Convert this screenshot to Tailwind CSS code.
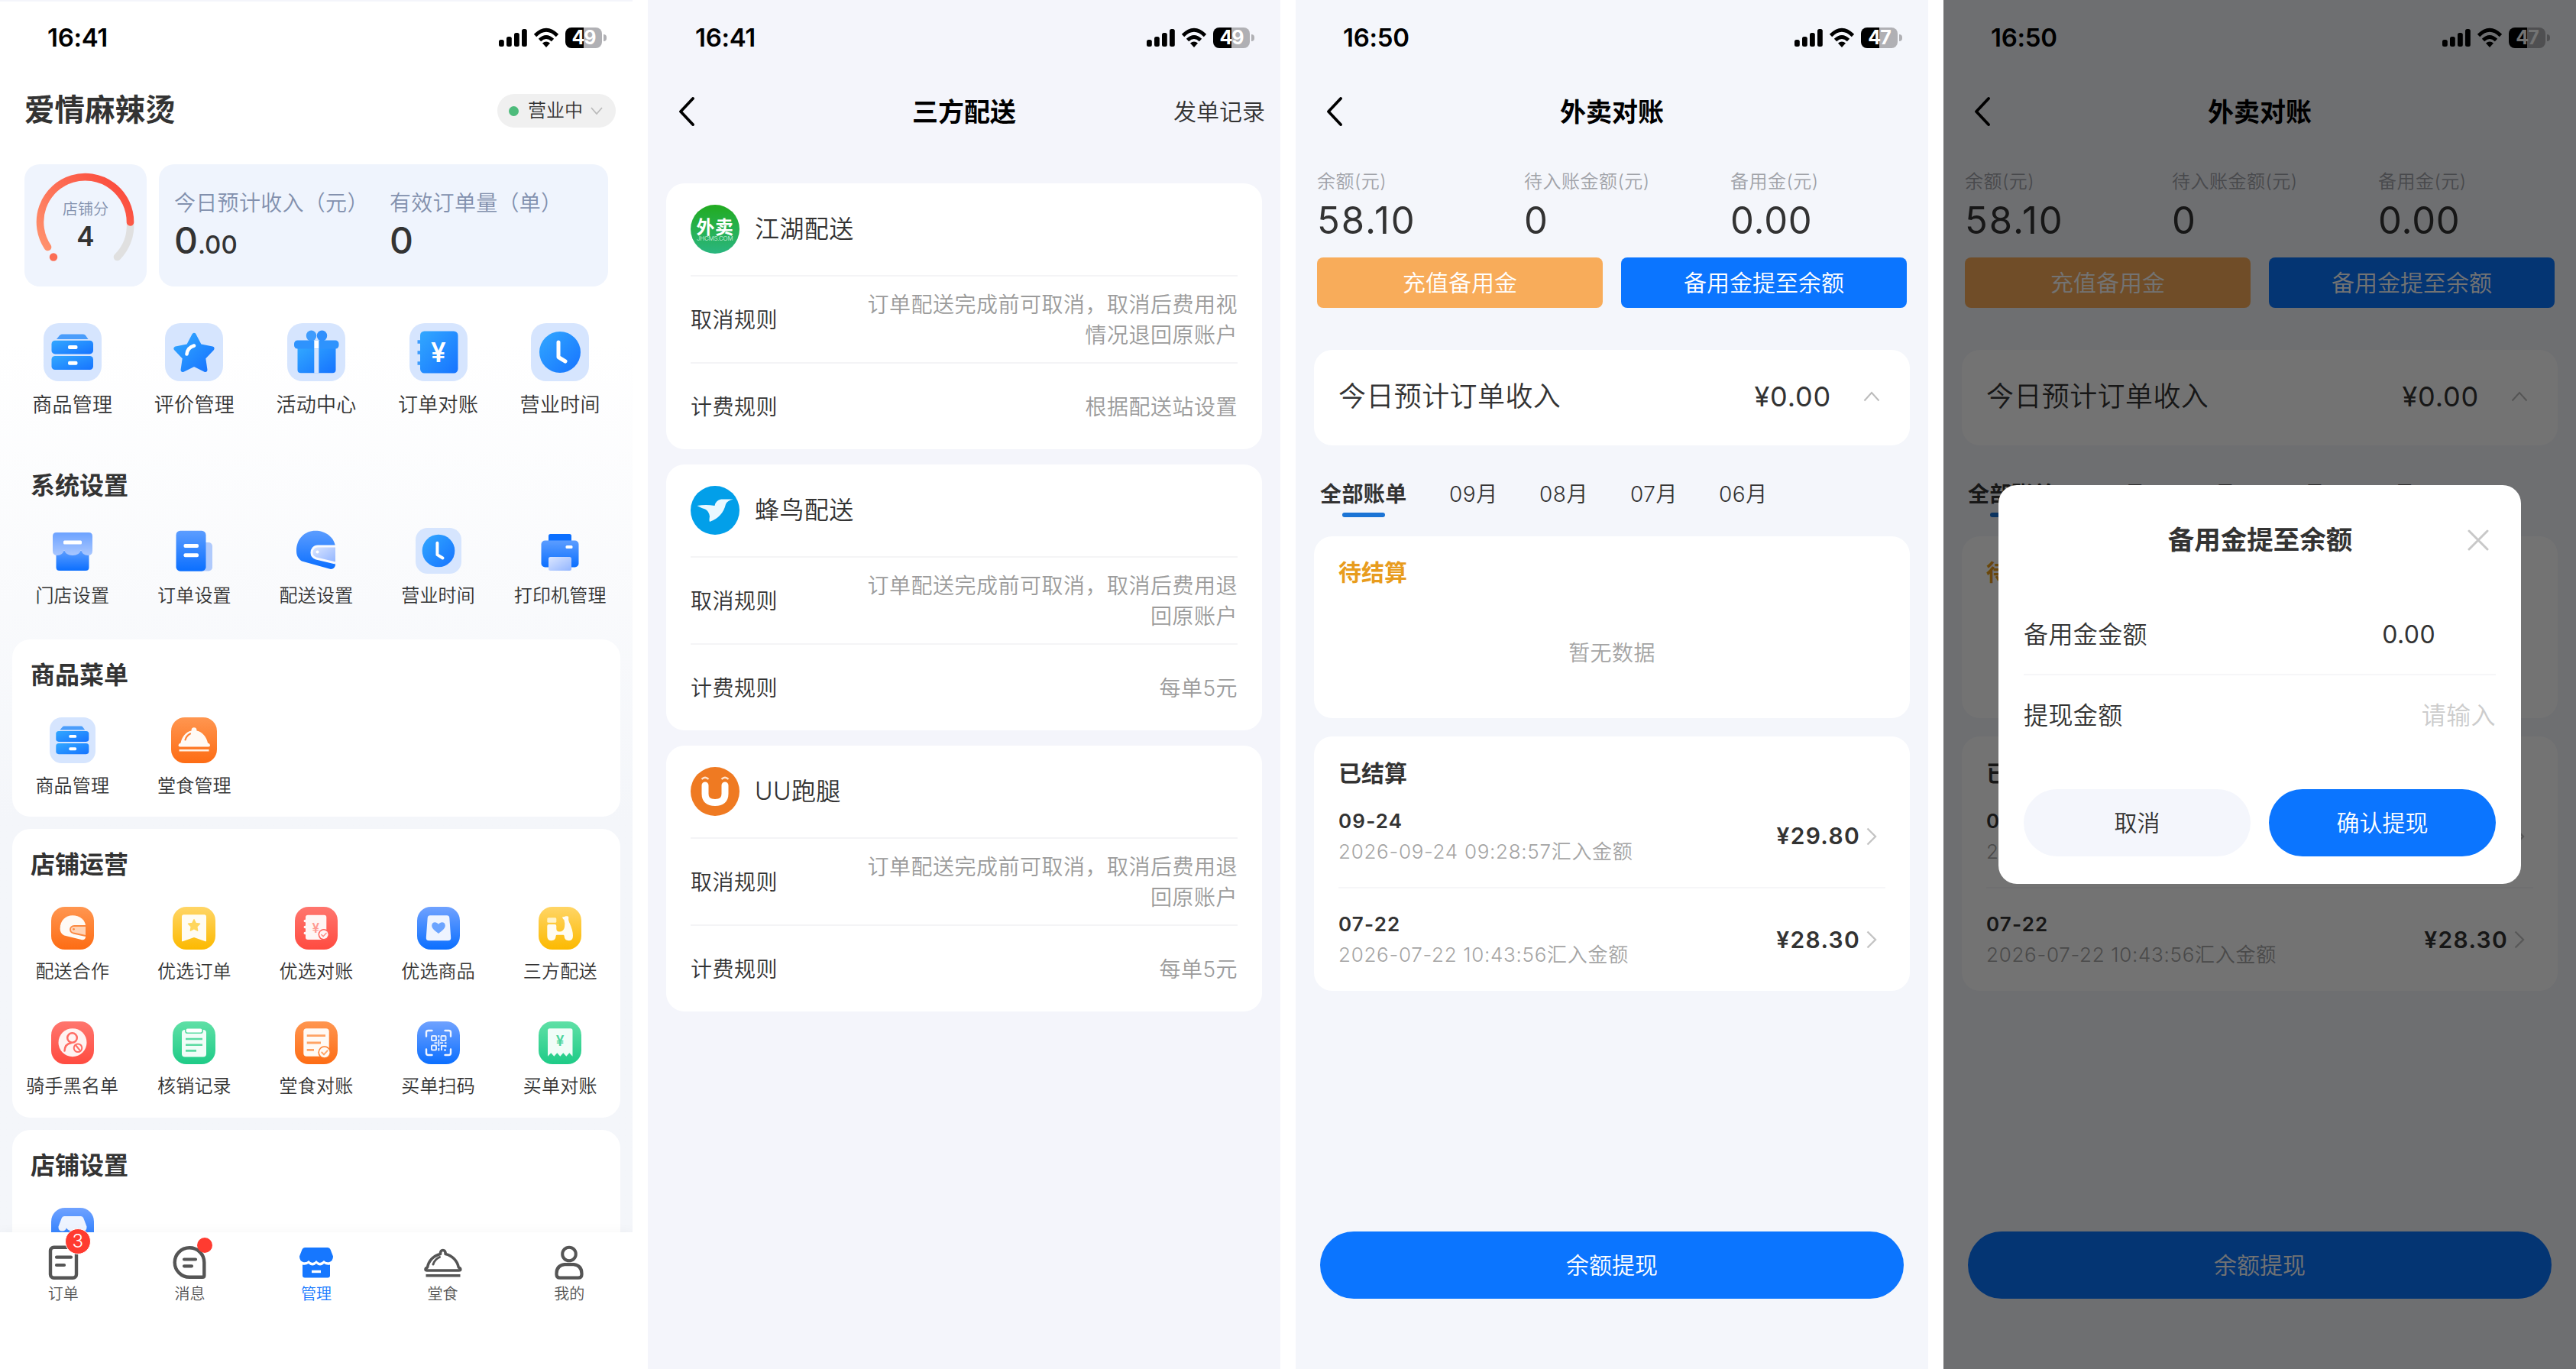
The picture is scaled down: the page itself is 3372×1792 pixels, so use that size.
<!DOCTYPE html>
<html lang="zh-CN">
<head>
    <meta charset="UTF-8">
    <meta name="viewport" content="width=device-width, initial-scale=1.0">
    <title>商家管理</title>
    <script src="https://cdn.jsdelivr.net/npm/@tailwindcss/browser@4"></script>
</head>
<body class="bg-white font-[Inter,'Noto_Sans_CJK_SC',sans-serif] font-[350] text-[#333]">

<!-- Icon sprite -->
<svg class="absolute w-0 h-0">
    <defs>
        <linearGradient id="g-blue" x1="0" y1="0" x2="1" y2="1"><stop offset="0" stop-color="#32a8ff"/><stop offset="1" stop-color="#1673ff"/></linearGradient>
        <linearGradient id="g-blue-v" x1="0" y1="0" x2="0" y2="1"><stop offset="0" stop-color="#5c9dff"/><stop offset="1" stop-color="#0b6fff"/></linearGradient>
        <linearGradient id="g-awning" x1="0" y1="0" x2="0" y2="1"><stop offset="0" stop-color="#6ca2ff"/><stop offset="1" stop-color="#a9c7ff"/></linearGradient>
        <linearGradient id="g-paper" x1="0" y1="0" x2="1" y2="1"><stop offset="0" stop-color="#dbe6ff"/><stop offset="1" stop-color="#92b5ff"/></linearGradient>
        <linearGradient id="t-orange" x1="0" y1="0" x2="0" y2="1"><stop offset="0" stop-color="#ff9650"/><stop offset="1" stop-color="#fd6c14"/></linearGradient>
        <linearGradient id="t-yellow" x1="0" y1="0" x2="0" y2="1"><stop offset="0" stop-color="#ffd566"/><stop offset="1" stop-color="#fcb900"/></linearGradient>
        <linearGradient id="t-red" x1="0" y1="0" x2="0" y2="1"><stop offset="0" stop-color="#ff766e"/><stop offset="1" stop-color="#ff4b40"/></linearGradient>
        <linearGradient id="t-blue" x1="0" y1="0" x2="0" y2="1"><stop offset="0" stop-color="#70a2ff"/><stop offset="1" stop-color="#0b6fff"/></linearGradient>
        <linearGradient id="t-green" x1="0" y1="0" x2="0" y2="1"><stop offset="0" stop-color="#5fe0a6"/><stop offset="1" stop-color="#1ecb87"/></linearGradient>
        <linearGradient id="g-logo" x1="0" y1="0" x2="0" y2="1"><stop offset="0" stop-color="#22ab20"/><stop offset="1" stop-color="#2ab680"/></linearGradient>
        <linearGradient id="g-gauge" x1="0" y1="1" x2="1" y2="0.3"><stop offset="0" stop-color="#ff936e"/><stop offset="1" stop-color="#fb4d3e"/></linearGradient>
    </defs>

    <symbol id="i-drawer" viewBox="0 0 76 76">
        <rect width="76" height="76" rx="20" fill="#d6e5fe"/>
        <path d="M24 14.5h28q2 0 3 1.600l3.500 4.900h-41.500l4-4.900q1.200-1.600 3-1.600z" fill="#4a9dfb"/>
        <rect x="10.500" y="22.700" width="54.500" height="17.700" rx="4.500" fill="url(#g-blue)"/>
        <rect x="10.500" y="43" width="54.500" height="18" rx="4.500" fill="url(#g-blue)"/>
        <rect x="32" y="29" width="12.500" height="5" rx="2" fill="#fff"/>
        <rect x="32" y="49.700" width="12.500" height="5" rx="2" fill="#fff"/>
    </symbol>
    <symbol id="i-star" viewBox="0 0 76 76">
        <rect width="76" height="76" rx="20" fill="#d6e5fe"/>
        <path d="M38 15.500l7.600 14.500 16.200 3.300-11.400 12 2.300 15.900-14.700-7.200-14.700 7.200 2.300-15.900-11.400-12 16.200-3.300z" fill="url(#g-blue)" stroke="url(#g-blue)" stroke-width="5.500" stroke-linejoin="round"/>
        <path d="M28.500 40.500q1-8.500 9.500-11" fill="none" stroke="#fff" stroke-width="4.500" stroke-linecap="round"/>
    </symbol>
    <symbol id="i-gift" viewBox="0 0 76 76">
        <rect width="76" height="76" rx="20" fill="#d6e5fe"/>
        <ellipse cx="31.500" cy="16.500" rx="6.700" ry="7" fill="#3f9cfd"/>
        <ellipse cx="45.500" cy="16.500" rx="6.700" ry="7" fill="#2f8ffd"/>
        <path d="M13.500 31h50v30q0 4.300-4.300 4.300h-41.400q-4.300 0-4.300-4.300z" fill="url(#g-blue)"/>
        <rect x="9" y="22.500" width="58.500" height="11" rx="4.500" fill="#2e93fd"/>
        <rect x="35.300" y="22.500" width="6" height="11" fill="#fff"/>
        <rect x="35.300" y="33.500" width="6" height="32" fill="#d6e5fe"/>
    </symbol>
    <symbol id="i-clock" viewBox="0 0 76 76">
        <rect width="76" height="76" rx="20" fill="#d6e5fe"/>
        <circle cx="38" cy="38" r="27" fill="url(#g-blue)"/>
        <path d="M36 25v19.500l9 5.500" fill="none" stroke="#fff" stroke-width="5" stroke-linecap="round" stroke-linejoin="round"/>
    </symbol>
    <symbol id="i-store" viewBox="0 0 60 60">
        <path d="M8.500 30h43v21.500q0 4.500-4.500 4.500h-34q-4.500 0-4.500-4.500z" fill="url(#g-blue-v)"/>
        <path d="M9 6h42q5 0 5 5v19q0 6-6 6-7 0-9-7-2 7-11 7t-11-7q-2 7-9 7-6 0-6-6v-19q0-5 5-5z" fill="url(#g-awning)"/>
        <rect x="18" y="16.500" width="24" height="5" rx="1.500" fill="#fff"/>
    </symbol>
    <symbol id="i-doc" viewBox="0 0 60 60">
        <rect x="38" y="19" width="16" height="37.500" rx="5" fill="#b0cafc"/>
        <rect x="6.500" y="3.700" width="39" height="53" rx="5.500" fill="url(#g-blue-v)"/>
        <rect x="16.500" y="21" width="19.500" height="5" rx="2" fill="#fff"/>
        <rect x="16.500" y="33.300" width="19.500" height="5" rx="2" fill="#fff"/>
    </symbol>
    <symbol id="i-helmet" viewBox="0 0 60 60">
        <path d="M4 30C4 14 15 3.700 29 3.700c13 0 24 8 26 20V48c0 4-4 7-8 5.500L11 43.500C6 40 4 36 4 30z" fill="url(#g-blue-v)"/>
        <path d="M55 24H32c-5 0-8 4-8 8.500s3 6.500 6 7.500l25 6z" fill="url(#g-paper)"/>
        <path d="M55 24H32c-5 0-8 4-8 8.500s3 6.500 6 7.500l25 6" fill="none" stroke="#f9fafe" stroke-width="3"/>
        <circle cx="31.500" cy="31.500" r="2" fill="#fff"/>
    </symbol>
    <symbol id="i-printer" viewBox="0 0 60 60">
        <rect x="15" y="8" width="30" height="14" rx="2.500" fill="#0b6fff"/>
        <rect x="5.500" y="16.500" width="49" height="35" rx="5" fill="url(#g-blue-v)"/>
        <rect x="37.500" y="23" width="9" height="4" rx="1.500" fill="#fff"/>
        <rect x="15" y="38" width="30" height="18" rx="2.500" fill="url(#g-paper)"/>
    </symbol>
    <symbol id="i-cloche" viewBox="0 0 60 60">
        <rect width="60" height="60" rx="18" fill="url(#t-orange)"/>
        <path d="M26.500 17.500q0-4.200 3.500-4.200t3.500 4.200C41 19 46.500 26 48 33.500q3 1 3 3t-2 2H11.500q-2 0-2-2t3-3C14 26 19 19 26.500 17.500z" fill="#fffaf5"/>
        <path d="M18.500 29.500q1.500-5.500 6.500-8" fill="none" stroke="#fd8438" stroke-width="2.200" stroke-linecap="round"/>
        <path d="M10.500 43.300h39" stroke="#fff1e4" stroke-width="2.600"/>
    </symbol>
    <symbol id="i-rider" viewBox="0 0 56 56">
        <rect width="56" height="56" rx="18" fill="url(#t-orange)"/>
        <path d="M11.600 28.500c0-10 7-17.200 16.500-17.200 8.900 0 16.900 6 16.900 14v14c0 3-2.500 4.500-5.500 3.800l-22.500-5.600c-3.500-1.500-5.400-5-5.400-9z" fill="#fffaf5"/>
        <path d="M45 25H30c-3 0-5 2-5 4.500s2 4.500 4 5l16 3.500z" fill="#ffd3b5"/>
        <path d="M45 25H30c-3 0-5 2-5 4.500s2 4.500 4 5l16 3.500" fill="none" stroke="#fb8840" stroke-width="1.800"/>
        <circle cx="29.500" cy="29.300" r="1.400" fill="#fb8840"/>
    </symbol>
    <symbol id="i-bookmark" viewBox="0 0 56 56">
        <rect width="56" height="56" rx="18" fill="url(#t-yellow)"/>
        <path d="M14.500 10.200h27q2.500 0 2.500 2.500v32q0 1-1.200.5L28 40l-14.800 5.200q-1.200.5-1.200-.5v-32q0-2.500 2.500-2.500z" fill="#fffcf3"/>
        <path d="M28 16.800l2.300 4.800 5.200.7-3.800 3.700.9 5.200-4.600-2.500-4.600 2.500.9-5.200-3.800-3.700 5.200-.7z" fill="#ffd65c" stroke="#ffd65c" stroke-width="1.500" stroke-linejoin="round"/>
    </symbol>
    <symbol id="i-bag" viewBox="0 0 56 56">
        <rect width="56" height="56" rx="18" fill="url(#t-blue)"/>
        <path d="M17 11.300h22q3 0 3.300 3l1.900 26q.3 4-3.700 4h-25q-4 0-3.700-4l1.900-26q.3-3 3.300-3z" fill="#eef4ff"/>
        <path d="M28 35c-5-4-8.800-6.500-8.800-10.500 0-5 6-5.800 8.800-1.800 2.800-4 8.800-3.200 8.800 1.800 0 4-3.800 6.500-8.800 10.500z" fill="#6ba4ff"/>
    </symbol>
    <symbol id="i-scooter" viewBox="0 0 56 56">
        <rect width="56" height="56" rx="18" fill="url(#t-yellow)"/>
        <rect x="11.300" y="14.200" width="12" height="6.500" rx="1.500" fill="#fff3c8"/>
        <path d="M11.300 25q0-2 2-2h8q2 0 2 2v3.500q0 4 3.700 4 6 0 7-6 .8-5-.6-9.500-1.800-.8-2.400-3.700 2.500.2 4.500-1h2.500q1.300.3 1.300 2-.8 3 1.700 8 4 8.500 4 15.700 0 6.300-5.600 6.300-5.400 0-5.900-6.500-.3-1-1.200-1h-8.300q-1.200 0-1.300 1-.4 6.500-5.900 6.500-5.500 0-5.500-6z" fill="#fffcf3"/>
    </symbol>
    <symbol id="i-block" viewBox="0 0 56 56">
        <rect width="56" height="56" rx="18" fill="url(#t-red)"/>
        <circle cx="28" cy="27.700" r="18.500" fill="#fff3f2"/>
        <circle cx="27.500" cy="21.500" r="6.300" fill="none" stroke="#ff6c64" stroke-width="2.500"/>
        <path d="M17.500 38.500q.5-9 8.500-10.200" fill="none" stroke="#ff6c64" stroke-width="2.500" stroke-linecap="round"/>
        <circle cx="35" cy="34.700" r="5.300" fill="none" stroke="#ff6c64" stroke-width="2"/>
        <path d="M32 31l6 7.400" stroke="#ff6c64" stroke-width="2"/>
    </symbol>
    <symbol id="i-clip" viewBox="0 0 56 56">
        <rect width="56" height="56" rx="18" fill="url(#t-green)"/>
        <rect x="12" y="11" width="32" height="35.600" rx="4" fill="#f1fdf8"/>
        <rect x="16.800" y="8.800" width="22.400" height="6.400" rx="2.800" fill="#fff" stroke="#59dca2" stroke-width="1.600"/>
        <path d="M17 23h22M17 30.700h22M17 38.400h14" stroke="#5bdba2" stroke-width="2.600"/>
    </symbol>
    <symbol id="i-list" viewBox="0 0 56 56">
        <rect width="56" height="56" rx="18" fill="url(#t-orange)"/>
        <rect x="11.300" y="9.300" width="33.400" height="36.400" rx="4" fill="#fffaf5"/>
        <path d="M15.700 18.700h24.300M15.700 28h18.300M15.700 37.300h9.300" stroke="#ffa364" stroke-width="2.800"/>
        <circle cx="38.700" cy="40.500" r="8.300" fill="#fd7d2c"/>
        <circle cx="38.700" cy="40.500" r="6.800" fill="#fffaf5"/>
        <path d="M35.200 40.500l2.800 2.800 4.600-5" fill="none" stroke="#ffa364" stroke-width="1.900" stroke-linecap="round"/>
    </symbol>
    <symbol id="i-scan" viewBox="0 0 56 56">
        <rect width="56" height="56" rx="18" fill="url(#t-blue)"/>
        <g fill="none" stroke="#f1f6ff" stroke-width="2.400" stroke-linecap="round">
            <path d="M12 19.500v-5q0-2.500 2.500-2.500h5M36.500 12h5q2.500 0 2.500 2.500v5M44 36.500v5q0 2.500-2.500 2.500h-5M19.500 44h-5q-2.500 0-2.500-2.500v-5"/>
        </g>
        <g fill="none" stroke="#e3edff" stroke-width="2">
            <rect x="19" y="19" width="6" height="6" rx="1"/>
            <rect x="31.500" y="19" width="6" height="6" rx="1"/>
            <rect x="19" y="31.500" width="6" height="6" rx="1"/>
            <path d="M28.300 18v3M28.300 23.500v9M28.300 35v3.500M22.500 28.300h4M30 28.300h4M36 28.300h2.500M32 38v-6h5.500v2M35 37.500h3"/>
        </g>
    </symbol>
    <symbol id="i-shop" viewBox="0 0 56 56">
        <rect width="56" height="56" rx="18" fill="url(#t-blue)"/>
        <path d="M17 11h22q2.500 0 3.300 2.500l4.200 11q.5 6-5 6-4 0-5.500-4-2.500 4-8 4t-8-4q-1.500 4-5.500 4-5.500 0-5-6l4.200-11q.8-2.500 3.300-2.500z" fill="#eef4ff"/>
    </symbol>

    <symbol id="tab-order" viewBox="0 0 60 60">
        <rect x="13" y="7.800" width="34" height="40" rx="4.500" fill="none" stroke="#555" stroke-width="4.400"/>
        <path d="M21 20.700h19M21 31h10" stroke="#555" stroke-width="4.200" stroke-linecap="round"/>
    </symbol>
    <symbol id="tab-msg" viewBox="0 0 60 60">
        <path d="M30 8.200A19.300 19.300 0 0 1 49.300 27.500V44.500Q49.300 46.800 47 46.800H30A19.300 19.300 0 0 1 30 8.200z" fill="none" stroke="#555" stroke-width="4.400"/>
        <path d="M23 23.500h15M23 32.300h10" stroke="#555" stroke-width="4.200" stroke-linecap="round"/>
    </symbol>
    <symbol id="tab-manage" viewBox="0 0 60 60">
        <path d="M15 8h30q2.500 0 3.500 2.500l3.500 9q0 6.500-5.500 7.700-4 .7-6.500-2.200-3 3-5.300 3t-4.700-3q-2.500 3-5 3t-5-3q-2.500 2.900-6.500 2.200-5.500-1.200-5.500-7.700l3.500-9q1-2.500 3.500-2.500z" fill="#1677ff"/>
        <path d="M12 30.500q4.500 1 7.800-1.500 2.700 2.500 5.200 2.500t5-2.500q2.500 2.500 5 2.500t5.200-2.500q3.300 2.500 7.800 1.500v14q0 3-3 3h-30q-3 0-3-3z" fill="#1677ff"/>
        <rect x="24" y="37.800" width="12" height="3.400" fill="#fff"/>
    </symbol>
    <symbol id="tab-dine" viewBox="0 0 60 60">
        <path d="M26.500 16.500q0-5 3.300-5t3.300 5c9 2 15.500 9 17.200 17.500q2.500 1 2.500 2.500t-2 1.500H9q-2 0-2-1.500t2.500-2.500c1.500-8.500 8-15.500 17-17.500z" fill="none" stroke="#555" stroke-width="3.600" stroke-linejoin="round"/>
        <path d="M17 30q2-6.500 8.500-9.500" fill="none" stroke="#555" stroke-width="3" stroke-linecap="round"/>
        <path d="M7.500 44.700h45" stroke="#555" stroke-width="3.600"/>
    </symbol>
    <symbol id="tab-me" viewBox="0 0 60 60">
        <circle cx="30" cy="16.500" r="8.800" fill="none" stroke="#555" stroke-width="4"/>
        <path d="M24 30.200h12q11 1.500 10.500 13 0 4.500-4.500 4.500H18q-4.500 0-4.500-4.500-.5-11.500 10.500-13z" fill="none" stroke="#555" stroke-width="4.200"/>
    </symbol>

    <symbol id="s-signal" viewBox="0 0 40 28">
        <rect x="0" y="16" width="6.800" height="9" rx="2.500"/><rect x="10" y="12" width="6.800" height="13" rx="2.500"/><rect x="20" y="7" width="6.800" height="18" rx="2.500"/><rect x="30" y="2" width="6.800" height="23" rx="2.500"/>
    </symbol>
    <symbol id="s-wifi" viewBox="0 0 34 28">
        <path d="M2.500 10.500Q17-4 31.500 10.500M8.500 16.500Q17 8.500 25.500 16.500" fill="none" stroke="#000" stroke-width="4.800"/>
        <path d="M12 20.500q5-4 10 0L17 26z"/>
    </symbol>
    <symbol id="s-back" viewBox="0 0 22 38">
        <path d="M19 2L3 19l16 17" fill="none" stroke="#000" stroke-width="3.800" stroke-linecap="round" stroke-linejoin="round"/>
    </symbol>
</svg>

<!-- Shared status bar -->
<template id="status-bar">
    <div class="flex h-[99px] shrink-0 items-center justify-between pl-[62px] pr-[34px] text-black">
        <span data-time class="text-[33px] font-semibold leading-none tracking-[-0.3px]"></span>
        <div class="flex items-center">
            <svg class="mr-[5px] h-7 w-10"><use href="#s-signal"/></svg>
            <svg class="mr-[8px] h-7 w-[34px]"><use href="#s-wifi"/></svg>
            <span class="flex h-[27px] w-12 items-center justify-center rounded-lg bg-linear-to-r from-black from-50% to-[#b0b0b4] to-50% text-[25px] font-bold leading-none tracking-[-1px] text-white" data-battery></span>
            <span class="ml-[2px] h-[9px] w-1 rounded-r-full bg-[#b0b0b4]"></span>
        </div>
    </div>
</template>

<!-- Billing screen, used with and without the withdraw dialog -->
<template id="bill-screen">
    <div data-status data-t="16:50" data-b="47"></div>
    <div class="flex h-[94px] shrink-0 items-center px-10">
        <svg class="h-[38px] w-[22px]"><use href="#s-back"/></svg>
        <h1 class="flex-1 pr-[22px] text-center text-[34px] font-bold text-black">外卖对账</h1>
    </div>
    <div class="mt-[27px] flex pl-7">
        <div class="w-[271px]">
            <p class="h-9 text-[24px] leading-9 tracking-[0.5px] text-[#a0a2a8]">余额(元)</p>
            <p class="mt-[3px] h-[60px] text-[49px] font-normal leading-[60px] tracking-[2px]">58.10</p>
        </div>
        <div class="w-[270px]">
            <p class="h-9 text-[24px] leading-9 tracking-[0.5px] text-[#a0a2a8]">待入账金额(元)</p>
            <p class="mt-[3px] h-[60px] text-[49px] font-normal leading-[60px]">0</p>
        </div>
        <div>
            <p class="h-9 text-[24px] leading-9 tracking-[0.5px] text-[#a0a2a8]">备用金(元)</p>
            <p class="mt-[3px] h-[60px] text-[49px] font-normal leading-[60px] tracking-[0.8px]">0.00</p>
        </div>
    </div>
    <div class="mt-[18px] grid grid-cols-2 gap-6 px-7 text-[30px] text-white">
        <button class="h-[66px] rounded-lg bg-[#f8ac5a]">充值备用金</button>
        <button class="h-[66px] rounded-lg bg-[#0b75ff]">备用金提至余额</button>
    </div>
    <div class="mx-6 mt-[55px] flex h-[125px] items-center rounded-3xl bg-white pb-[3px] pl-8 pr-[39px] text-[36px] leading-none">
        <span class="flex-1 tracking-[0.4px]">今日预计订单收入</span>
        <span class="font-normal tracking-[0.8px]">¥0.00</span>
        <svg class="ml-[42px] h-[14px] w-[22px]" viewBox="0 0 22 14"><path d="M1.500 12.500L11 2l9.500 10.500" fill="none" stroke="#bbb" stroke-width="2"/></svg>
    </div>
    <div class="mt-[44px] flex h-[50px] pl-8 text-[28px] leading-10">
        <div class="flex w-[169px] flex-col">
            <span class="pb-[4px] font-bold tracking-[0.4px]">全部账单</span>
            <span class="ml-[29px] h-[6px] w-14 rounded-full bg-[#1b74d5]"></span>
        </div>
        <span class="w-[118px] tracking-[0.5px]">09月</span>
        <span class="w-[119px] tracking-[0.5px]">08月</span>
        <span class="w-[116px] tracking-[0.5px]">07月</span>
        <span class="tracking-[0.5px]">06月</span>
    </div>
    <div class="mx-6 mt-[25px] h-[238px] rounded-3xl bg-white px-8 pt-[27px]">
        <p class="text-[30px] font-bold leading-10 text-[#e89c1d]">待结算</p>
        <p class="mt-[66px] text-center text-[28px] leading-10 tracking-[0.4px] text-[#a4a4a4]">暂无数据</p>
    </div>
    <div class="mx-6 mt-6 h-[333px] rounded-3xl bg-white px-8 pt-[28px]">
        <p class="text-[30px] font-bold leading-10">已结算</p>
        <div class="flex h-[131px] items-center border-b-2 border-[#f6f6f8] pb-[4px]">
            <div class="flex-1">
                <p class="text-[26px] font-semibold leading-10 tracking-[1.2px]">09-24</p>
                <p class="text-[26px] leading-10 tracking-[0.7px] text-[#a4a4a4]">2026-09-24 09:28:57汇入金额</p>
            </div>
            <span class="text-[30px] font-semibold tracking-[1.3px]">¥29.80</span>
            <svg class="ml-[8px] mr-[11px] h-6 w-[14px]" viewBox="0 0 14 24"><path d="M1.500 1.500L12 12 1.500 22.500" fill="none" stroke="#c4c4c4" stroke-width="2.400"/></svg>
        </div>
        <div class="flex h-[134px] items-center">
            <div class="flex-1">
                <p class="text-[26px] font-semibold leading-10 tracking-[1.2px]">07-22</p>
                <p class="text-[26px] leading-10 tracking-[0.7px] text-[#a4a4a4]">2026-07-22 10:43:56汇入金额</p>
            </div>
            <span class="text-[30px] font-semibold tracking-[1.3px]">¥28.30</span>
            <svg class="ml-[8px] mr-[11px] h-6 w-[14px]" viewBox="0 0 14 24"><path d="M1.500 1.500L12 12 1.500 22.500" fill="none" stroke="#c4c4c4" stroke-width="2.400"/></svg>
        </div>
    </div>
    <button class="mx-8 mb-[92px] mt-auto h-[88px] rounded-full bg-[#0b75ff] text-[30px] text-white">余额提现</button>
</template>

<main class="flex h-[1792px] w-[3372px] gap-5 overflow-hidden">

    <!-- Manage -->
    <section class="relative flex h-full w-[828px] flex-col overflow-hidden border-t-2 border-[#f4f5fb] bg-linear-to-b from-white from-25% to-[#f4f6fa] to-60%">
        <div class="-mt-[2px]" data-status data-t="16:41" data-b="49"></div>
        <div class="flex h-[92px] shrink-0 items-center justify-between pl-8 pr-[22px]">
            <h1 class="text-[39.500px] font-bold leading-none">爱情麻辣烫</h1>
            <div class="flex h-11 w-[155px] items-center rounded-full bg-[#f0f0f0] pl-[15px]">
                <span class="mr-[12px] h-[13px] w-[13px] rounded-full bg-[#4dbb7b]"></span>
                <span class="text-[24px] leading-none">营业中</span>
                <svg class="ml-[10px] h-[10px] w-4" viewBox="0 0 16 10"><path d="M1 1l7 8 7-8" fill="none" stroke="#bbb" stroke-width="1.800"/></svg>
            </div>
        </div>

        <div class="mt-6 flex h-40 shrink-0 gap-4 px-8">
            <div class="relative h-40 w-40 shrink-0 rounded-[20px] bg-[#eff4fd]">
                <svg class="h-40 w-40" viewBox="0 0 160 160" fill="none" stroke-width="9.600" stroke-linecap="round">
                    <path d="M138.500 76A59 59 0 0 1 121.500 121.500" stroke="#e0e0e0"/>
                    <path d="M30.500 108.500A59 59 0 1 1 138.500 76" stroke="url(#g-gauge)"/>
                    <circle cx="38" cy="121.500" r="5.200" fill="#fb6e55"/>
                </svg>
                <div class="absolute inset-x-0 top-[43px] flex flex-col items-center">
                    <span class="text-[20px] leading-8 text-[#8290ad]">店铺分</span>
                    <span class="mt-[1px] text-[35px] font-semibold leading-[36px]">4</span>
                </div>
            </div>
            <div class="flex flex-1 rounded-[20px] bg-[#eff4fd] pl-[20px] pt-[33px]">
                <div class="w-[282px]">
                    <p class="whitespace-nowrap text-[28px] leading-9 tracking-[0.3px] text-[#8290ad]">今日预计收入（元）</p>
                    <p class="mt-[3px] text-[48px] font-medium leading-[56px]">0<span class="text-[33px]">.00</span></p>
                </div>
                <div>
                    <p class="whitespace-nowrap text-[28px] leading-9 tracking-[0.3px] text-[#8290ad]">有效订单量（单）</p>
                    <p class="mt-[3px] text-[48px] font-medium leading-[56px]">0</p>
                </div>
            </div>
        </div>

        <div class="mx-[15px] mt-12 grid grid-cols-5 text-[26px] leading-9 tracking-[0.3px]">
            <div class="flex flex-col items-center gap-[13px]"><svg class="h-[76px] w-[76px]"><use href="#i-drawer"/></svg>商品管理</div>
            <div class="flex flex-col items-center gap-[13px]"><svg class="h-[76px] w-[76px]"><use href="#i-star"/></svg>评价管理</div>
            <div class="flex flex-col items-center gap-[13px]"><svg class="h-[76px] w-[76px]"><use href="#i-gift"/></svg>活动中心</div>
            <div class="flex flex-col items-center gap-[13px]">
                <svg class="h-[76px] w-[76px]" viewBox="0 0 76 76">
                    <rect width="76" height="76" rx="20" fill="#d6e5fe"/>
                    <path d="M10.500 24.500h6M10.500 38.500h6M10.500 52.500h6" stroke="#3f9cfd" stroke-width="4.500"/>
                    <rect x="14" y="10.500" width="49.500" height="55" rx="5.500" fill="url(#g-blue)"/>
                    <text x="38" y="51" font-size="35" font-weight="600" text-anchor="middle" fill="#fff">¥</text>
                </svg>
                订单对账
            </div>
            <div class="flex flex-col items-center gap-[13px]"><svg class="h-[76px] w-[76px]"><use href="#i-clock"/></svg>营业时间</div>
        </div>

        <h2 class="ml-10 mt-[64px] text-[32px] font-bold leading-[48px]">系统设置</h2>
        <div class="mx-[15px] mt-[31px] grid grid-cols-5 whitespace-nowrap text-[24px] leading-8 tracking-[0.2px]">
            <div class="flex flex-col items-center gap-[13px]"><svg class="h-[60px] w-[60px]"><use href="#i-store"/></svg>门店设置</div>
            <div class="flex flex-col items-center gap-[13px]"><svg class="h-[60px] w-[60px]"><use href="#i-doc"/></svg>订单设置</div>
            <div class="flex flex-col items-center gap-[13px]"><svg class="h-[60px] w-[60px]"><use href="#i-helmet"/></svg>配送设置</div>
            <div class="flex flex-col items-center gap-[13px]"><svg class="h-[60px] w-[60px]"><use href="#i-clock"/></svg>营业时间</div>
            <div class="flex flex-col items-center gap-[13px]"><svg class="h-[60px] w-[60px]"><use href="#i-printer"/></svg>打印机管理</div>
        </div>

        <div class="mx-4 mt-[41px] h-[232px] shrink-0 rounded-3xl bg-white pt-[23px]">
            <h2 class="ml-6 text-[32px] font-bold leading-[48px]">商品菜单</h2>
            <div class="-mx-px mt-[31px] grid grid-cols-5 text-[24px] leading-8 tracking-[0.2px]">
                <div class="flex flex-col items-center gap-[14px]"><svg class="h-[60px] w-[60px]"><use href="#i-drawer"/></svg>商品管理</div>
                <div class="flex flex-col items-center gap-[14px]"><svg class="h-[60px] w-[60px]"><use href="#i-cloche"/></svg>堂食管理</div>
            </div>
        </div>

        <div class="mx-4 mt-4 h-[378px] shrink-0 rounded-3xl bg-white pt-[23px]">
            <h2 class="ml-6 text-[32px] font-bold leading-[48px]">店铺运营</h2>
            <div class="-mx-px mt-[31px] grid grid-cols-5 gap-y-[49px] whitespace-nowrap text-[24px] leading-8 tracking-[0.2px]">
                <div class="flex flex-col items-center gap-[13px]"><svg class="h-14 w-14"><use href="#i-rider"/></svg>配送合作</div>
                <div class="flex flex-col items-center gap-[13px]"><svg class="h-14 w-14"><use href="#i-bookmark"/></svg>优选订单</div>
                <div class="flex flex-col items-center gap-[13px]">
                    <svg class="h-14 w-14" viewBox="0 0 56 56">
                        <rect width="56" height="56" rx="18" fill="url(#t-red)"/>
                        <rect x="14" y="10.700" width="27.300" height="32.300" rx="3" fill="#fff6f5"/>
                        <path d="M13.300 18.500h2M13.300 26.500h2M13.300 34.500h2" stroke="#fff6f5" stroke-width="3.500" stroke-linecap="round"/>
                        <text x="27.300" y="33.700" font-size="17" font-weight="600" text-anchor="middle" fill="#ff9a93">¥</text>
                        <circle cx="37.800" cy="36.300" r="7.200" fill="#ff5f56"/>
                        <circle cx="37.800" cy="36.300" r="5.700" fill="#fff6f5"/>
                        <path d="M34.800 36.500l2.300 2.300 4-4.200" fill="none" stroke="#ff8b84" stroke-width="1.400" stroke-linecap="round"/>
                    </svg>
                    优选对账
                </div>
                <div class="flex flex-col items-center gap-[13px]"><svg class="h-14 w-14"><use href="#i-bag"/></svg>优选商品</div>
                <div class="flex flex-col items-center gap-[13px]"><svg class="h-14 w-14"><use href="#i-scooter"/></svg>三方配送</div>
                <div class="flex flex-col items-center gap-[13px]"><svg class="h-14 w-14"><use href="#i-block"/></svg>骑手黑名单</div>
                <div class="flex flex-col items-center gap-[13px]"><svg class="h-14 w-14"><use href="#i-clip"/></svg>核销记录</div>
                <div class="flex flex-col items-center gap-[13px]"><svg class="h-14 w-14"><use href="#i-list"/></svg>堂食对账</div>
                <div class="flex flex-col items-center gap-[13px]"><svg class="h-14 w-14"><use href="#i-scan"/></svg>买单扫码</div>
                <div class="flex flex-col items-center gap-[13px]">
                    <svg class="h-14 w-14" viewBox="0 0 56 56">
                        <rect width="56" height="56" rx="18" fill="url(#t-green)"/>
                        <path d="M14.500 9.300h27.500q2.500 0 2.500 2.500v34l-4.200-4.500-4 4.500-4-4.500-4 4.500-4-4.500-4 4.500-4-4.500-4.300 4.500v-34q0-2.500 2.500-2.500z" fill="#f1fdf8"/>
                        <text x="28.200" y="32" font-size="19" font-weight="600" text-anchor="middle" fill="#4fd59c">¥</text>
                    </svg>
                    买单对账
                </div>
            </div>
        </div>

        <div class="mx-4 mt-4 h-[400px] shrink-0 rounded-t-3xl bg-white pt-[23px]">
            <h2 class="ml-6 text-[32px] font-bold leading-[48px]">店铺设置</h2>
            <div class="-mx-px mt-[31px] grid grid-cols-5">
                <svg class="h-14 w-14 justify-self-center"><use href="#i-shop"/></svg>
            </div>
        </div>

        <!-- Tab bar -->
        <nav class="absolute inset-x-0 bottom-0 grid h-[179px] grid-cols-5 bg-white pt-3 text-[20px] leading-6 text-[#555] shadow-[0_-2px_14px_rgba(0,0,0,0.03)]">
            <div class="flex flex-col items-center">
                <div class="relative h-[57px]">
                    <svg class="h-[60px] w-[60px]"><use href="#tab-order"/></svg>
                    <span class="absolute left-[32px] top-[-17px] flex h-[34px] w-[34px] items-center justify-center rounded-full border-[1.500px] border-white bg-[#ff3b30] text-[24px] leading-none text-white">3</span>
                </div>
                订单
            </div>
            <div class="flex flex-col items-center">
                <div class="relative h-[57px]">
                    <svg class="h-[60px] w-[60px]"><use href="#tab-msg"/></svg>
                    <span class="absolute left-[40px] top-[-5px] h-5 w-5 rounded-full bg-[#ff3b30]"></span>
                </div>
                消息
            </div>
            <div class="flex flex-col items-center text-[#1677ff]"><div class="h-[57px]"><svg class="h-[60px] w-[60px]"><use href="#tab-manage"/></svg></div>管理</div>
            <div class="flex flex-col items-center"><div class="h-[57px]"><svg class="h-[60px] w-[60px]"><use href="#tab-dine"/></svg></div>堂食</div>
            <div class="flex flex-col items-center"><div class="h-[57px]"><svg class="h-[60px] w-[60px]"><use href="#tab-me"/></svg></div>我的</div>
        </nav>
    </section>

    <!-- Third-party delivery -->
    <section class="flex h-full w-[828px] flex-col bg-[#f4f5fb]">
        <div data-status data-t="16:41" data-b="49"></div>
        <div class="grid h-[94px] shrink-0 grid-cols-3 items-center pl-10 pr-5">
            <svg class="h-[38px] w-[22px]"><use href="#s-back"/></svg>
            <h1 class="pr-5 text-center text-[34px] font-bold text-black">三方配送</h1>
            <span class="text-right text-[30px]">发单记录</span>
        </div>

        <div class="mt-[47px] flex flex-col gap-5 px-6">
            <div class="h-[348px] rounded-3xl bg-white px-8">
                <div class="flex h-[120px] items-center gap-5 text-[32px] tracking-[0.4px]">
                    <svg class="h-16 w-16" viewBox="0 0 64 64">
                        <circle cx="32" cy="32" r="32" fill="url(#g-logo)"/>
                        <text x="32" y="38" font-size="24" font-weight="700" text-anchor="middle" fill="#fff">外卖</text>
                        <text x="32" y="47" font-size="8" text-anchor="middle" textLength="48" fill="#d9f5e2">JHCMS.COM</text>
                    </svg>
                    江湖配送
                </div>
                <div class="flex h-[114px] items-center justify-between border-t-2 border-[#f4f4f6] pt-px text-[28px] leading-10 tracking-[0.500px]">
                    <span>取消规则</span>
                    <p class="w-[500px] text-right text-[#9b9b9b]">订单配送完成前可取消，取消后费用视情况退回原账户</p>
                </div>
                <div class="flex h-[114px] items-center justify-between border-t-2 border-[#f4f4f6] pt-px text-[28px] leading-10 tracking-[0.500px]">
                    <span>计费规则</span>
                    <p class="text-right text-[#9b9b9b]">根据配送站设置</p>
                </div>
            </div>

            <div class="h-[348px] rounded-3xl bg-white px-8">
                <div class="flex h-[120px] items-center gap-5 text-[32px] tracking-[0.4px]">
                    <svg class="h-16 w-16" viewBox="0 0 64 64">
                        <circle cx="32" cy="32" r="32" fill="#029fe9"/>
                        <path d="M8.500 26Q20 24 31.500 26 33 18.500 40 17.500H56Q48 19 46 24 42 41 25 47 24 45 25 40 24 33 19 30.500 14 29 8.500 26z" fill="#e9f8ff"/>
                    </svg>
                    蜂鸟配送
                </div>
                <div class="flex h-[114px] items-center justify-between border-t-2 border-[#f4f4f6] pt-px text-[28px] leading-10 tracking-[0.500px]">
                    <span>取消规则</span>
                    <p class="w-[500px] text-right text-[#9b9b9b]">订单配送完成前可取消，取消后费用退回原账户</p>
                </div>
                <div class="flex h-[114px] items-center justify-between border-t-2 border-[#f4f4f6] pt-px text-[28px] leading-10 tracking-[0.500px]">
                    <span>计费规则</span>
                    <p class="text-right text-[#9b9b9b]">每单5元</p>
                </div>
            </div>

            <div class="h-[348px] rounded-3xl bg-white px-8">
                <div class="flex h-[120px] items-center gap-5 text-[32px] tracking-[0.4px]">
                    <svg class="h-16 w-16" viewBox="0 0 64 64">
                        <circle cx="32" cy="32" r="32" fill="#ef7a22"/>
                        <path d="M19 24v11q0 11.500 13 11.500T45 35V24" fill="none" stroke="#fff" stroke-width="9" stroke-linecap="round"/>
                        <path d="M14.500 16q4.500-4.500 9 0M40.500 16q4.500-4.500 9 0" fill="none" stroke="#ffe3cc" stroke-width="2.400"/>
                    </svg>
                    UU跑腿
                </div>
                <div class="flex h-[114px] items-center justify-between border-t-2 border-[#f4f4f6] pt-px text-[28px] leading-10 tracking-[0.500px]">
                    <span>取消规则</span>
                    <p class="w-[500px] text-right text-[#9b9b9b]">订单配送完成前可取消，取消后费用退回原账户</p>
                </div>
                <div class="flex h-[114px] items-center justify-between border-t-2 border-[#f4f4f6] pt-px text-[28px] leading-10 tracking-[0.500px]">
                    <span>计费规则</span>
                    <p class="text-right text-[#9b9b9b]">每单5元</p>
                </div>
            </div>
        </div>
    </section>

    <!-- Billing -->
    <section class="flex h-full w-[828px] flex-col bg-[#f4f6fb]" data-bill></section>

    <!-- Billing + withdraw dialog -->
    <div class="relative h-full w-[828px]">
        <section class="flex h-full flex-col bg-[#f4f6fb]" data-bill></section>
        <div class="absolute inset-0 bg-black/55 px-[72px] pt-[635px]">
            <div class="h-[522px] rounded-3xl bg-white px-[33px] pt-[48px]">
                <div class="flex h-12 items-center">
                    <h2 class="flex-1 pl-[38px] text-center text-[34.500px] font-bold leading-none">备用金提至余额</h2>
                    <svg class="mr-[9px] h-7 w-7" viewBox="0 0 28 28"><path d="M2 2l24 24M26 2L2 26" stroke="#c8c8c8" stroke-width="3" stroke-linecap="round"/></svg>
                </div>
                <div class="mt-[47px] flex h-[106px] items-center justify-between border-b-2 border-[#f6f6f8] pt-[2px] text-[32px] leading-none tracking-[0.4px]">
                    <span>备用金金额</span>
                    <span class="pr-[79px] font-normal">0.00</span>
                </div>
                <div class="flex h-[104px] items-center justify-between pt-[2px] text-[32px] leading-none tracking-[0.4px]">
                    <span>提现金额</span>
                    <span class="text-[#ccc]">请输入</span>
                </div>
                <div class="mt-[45px] grid grid-cols-2 gap-6 text-[30px]">
                    <button class="h-[88px] rounded-full bg-[#f4f6fc]">取消</button>
                    <button class="h-[88px] rounded-full bg-[#0b75ff] text-white">确认提现</button>
                </div>
            </div>
        </div>
    </div>
</main>

<script>
    const billTemplate = document.getElementById('bill-screen');
    const statusTemplate = document.getElementById('status-bar');

    document.querySelectorAll('[data-bill]').forEach((el) => {
        el.appendChild(billTemplate.content.cloneNode(true));
    });

    document.querySelectorAll('[data-status]').forEach((el) => {
        const bar = statusTemplate.content.cloneNode(true);
        bar.querySelector('[data-time]').textContent = el.dataset.t;
        bar.querySelector('[data-battery]').textContent = el.dataset.b;
        el.appendChild(bar);
    });
</script>
</body>
</html>
